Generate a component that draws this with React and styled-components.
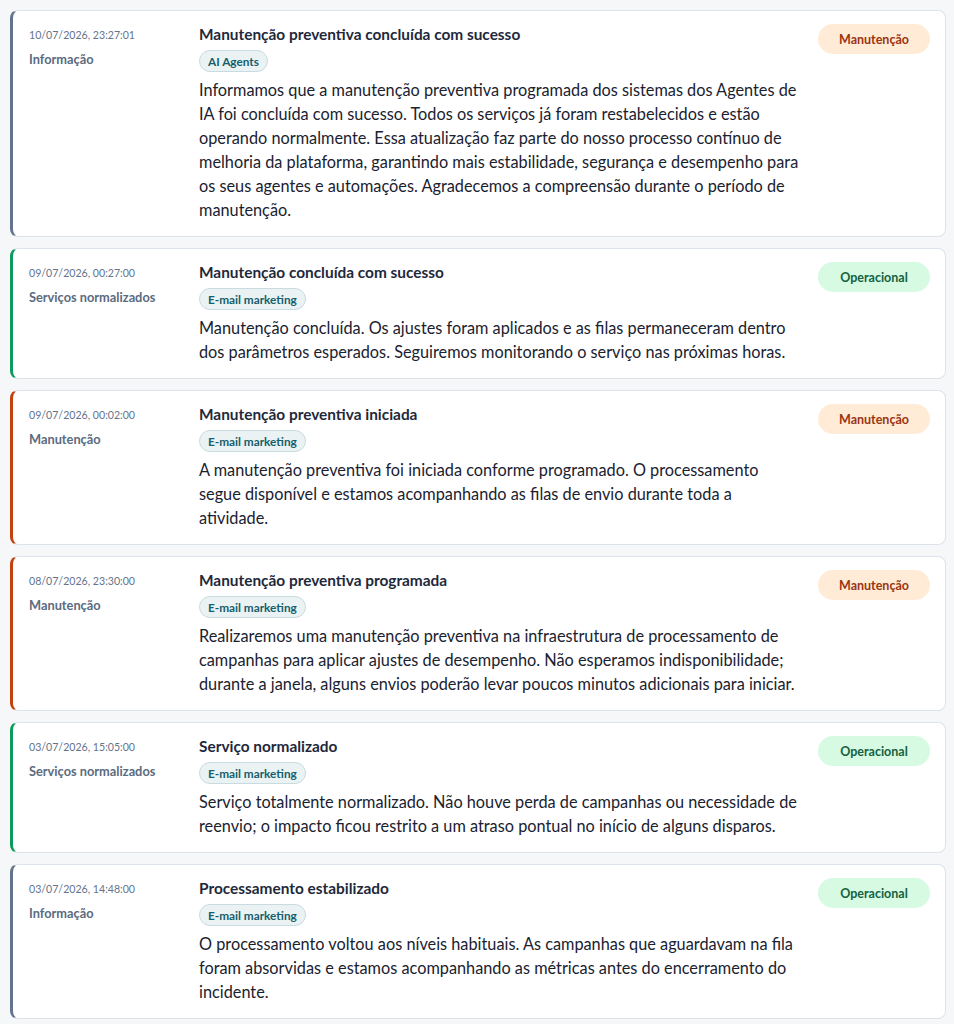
import React from 'react';
import styled, {createGlobalStyle} from 'styled-components';

const GlobalStyle = createGlobalStyle`
  html, body {
    margin: 0;
    background: #f6f7f9;
    font-family: Lato, "Noto Sans", sans-serif;
    color: #1f2937;
  }
`;

const tones = {
    info: '#64748b',
    ok: '#0e9a5c',
    maint: '#c2410c',
};

const badges = {
    maint: {bg: '#ffebd6', fg: '#9a3412', label: 'Manutenção'},
    ok: {bg: '#d7fae2', fg: '#14613f', label: 'Operacional'},
};

const List = styled.div`
  display: flex;
  flex-direction: column;
  gap: 11px;
  padding: 10px 8px 10px 10px;
`;

const Card = styled.article`
  display: grid;
  grid-template-columns: 154px 1fr 112px;
  column-gap: 16px;
  padding: 14px 15px 14px 16px;
  background: #fff;
  border: 1px solid #dde3ea;
  border-left: 3px solid ${p => p.$tone};
  border-radius: 8px;
`;

const Meta = styled.div`
  display: flex;
  flex-direction: column;
  gap: 6px;
  padding-top: 1px;
`;

const Stamp = styled.span`
  font-size: 10.6px;
  line-height: 18px;
  color: #64748b;
`;

const Kind = styled.span`
  font-size: 12.8px;
  line-height: 18px;
  font-weight: 700;
  color: #5b6b80;
`;

const Content = styled.div`
  display: flex;
  flex-direction: column;
  align-items: flex-start;
`;

const Title = styled.h3`
  margin: 0;
  font-size: 15.4px;
  line-height: 18px;
  font-weight: 700;
  color: #1e293b;
`;

const Tag = styled.span`
  margin-top: 7px;
  padding: 0 8px;
  height: 22px;
  box-sizing: border-box;
  display: inline-flex;
  align-items: center;
  font-size: 11.8px;
  font-weight: 700;
  color: #155e6b;
  background: #eaf2f4;
  border: 1px solid #c8dbe0;
  border-radius: 999px;
`;

const Body = styled.p`
  margin: 6px 0 0;
  font-size: 16.3px;
  line-height: 24px;
  color: #1a2230;
`;

const Badge = styled.span`
  height: 30px;
  margin-top: -1px;
  display: flex;
  align-items: center;
  justify-content: center;
  border-radius: 999px;
  font-size: 12.5px;
  font-weight: 700;
  background: ${p => p.$bg};
  color: ${p => p.$fg};
`;

const events = [
    {
        when: '10/07/2026, 23:27:01', kind: 'Informação', tone: 'info', badge: 'maint',
        title: 'Manutenção preventiva concluída com sucesso', tag: 'AI Agents',
        text: 'Informamos que a manutenção preventiva programada dos sistemas dos Agentes de IA foi concluída com sucesso. Todos os serviços já foram restabelecidos e estão operando normalmente. Essa atualização faz parte do nosso processo contínuo de melhoria da plataforma, garantindo mais estabilidade, segurança e desempenho para os seus agentes e automações. Agradecemos a compreensão durante o período de manutenção.',
    },
    {
        when: '09/07/2026, 00:27:00', kind: 'Serviços normalizados', tone: 'ok', badge: 'ok',
        title: 'Manutenção concluída com sucesso', tag: 'E-mail marketing',
        text: 'Manutenção concluída. Os ajustes foram aplicados e as filas permaneceram dentro dos parâmetros esperados. Seguiremos monitorando o serviço nas próximas horas.',
    },
    {
        when: '09/07/2026, 00:02:00', kind: 'Manutenção', tone: 'maint', badge: 'maint',
        title: 'Manutenção preventiva iniciada', tag: 'E-mail marketing',
        text: 'A manutenção preventiva foi iniciada conforme programado. O processamento segue disponível e estamos acompanhando as filas de envio durante toda a atividade.',
    },
    {
        when: '08/07/2026, 23:30:00', kind: 'Manutenção', tone: 'maint', badge: 'maint',
        title: 'Manutenção preventiva programada', tag: 'E-mail marketing',
        text: 'Realizaremos uma manutenção preventiva na infraestrutura de processamento de campanhas para aplicar ajustes de desempenho. Não esperamos indisponibilidade; durante a janela, alguns envios poderão levar poucos minutos adicionais para iniciar.',
    },
    {
        when: '03/07/2026, 15:05:00', kind: 'Serviços normalizados', tone: 'ok', badge: 'ok',
        title: 'Serviço normalizado', tag: 'E-mail marketing',
        text: 'Serviço totalmente normalizado. Não houve perda de campanhas ou necessidade de reenvio; o impacto ficou restrito a um atraso pontual no início de alguns disparos.',
    },
    {
        when: '03/07/2026, 14:48:00', kind: 'Informação', tone: 'info', badge: 'ok',
        title: 'Processamento estabilizado', tag: 'E-mail marketing',
        text: 'O processamento voltou aos níveis habituais. As campanhas que aguardavam na fila foram absorvidas e estamos acompanhando as métricas antes do encerramento do incidente.',
    },
];

const App = () => (
    <>
        <GlobalStyle/>
        <List>
            {events.map(ev => {
                const b = badges[ev.badge];
                return (
                    <Card key={ev.when} $tone={tones[ev.tone]}>
                        <Meta>
                            <Stamp>{ev.when}</Stamp>
                            <Kind>{ev.kind}</Kind>
                        </Meta>
                        <Content>
                            <Title>{ev.title}</Title>
                            <Tag>{ev.tag}</Tag>
                            <Body>{ev.text}</Body>
                        </Content>
                        <div>
                            <Badge $bg={b.bg} $fg={b.fg}>{b.label}</Badge>
                        </div>
                    </Card>
                );
            })}
        </List>
    </>
);

export default App;
